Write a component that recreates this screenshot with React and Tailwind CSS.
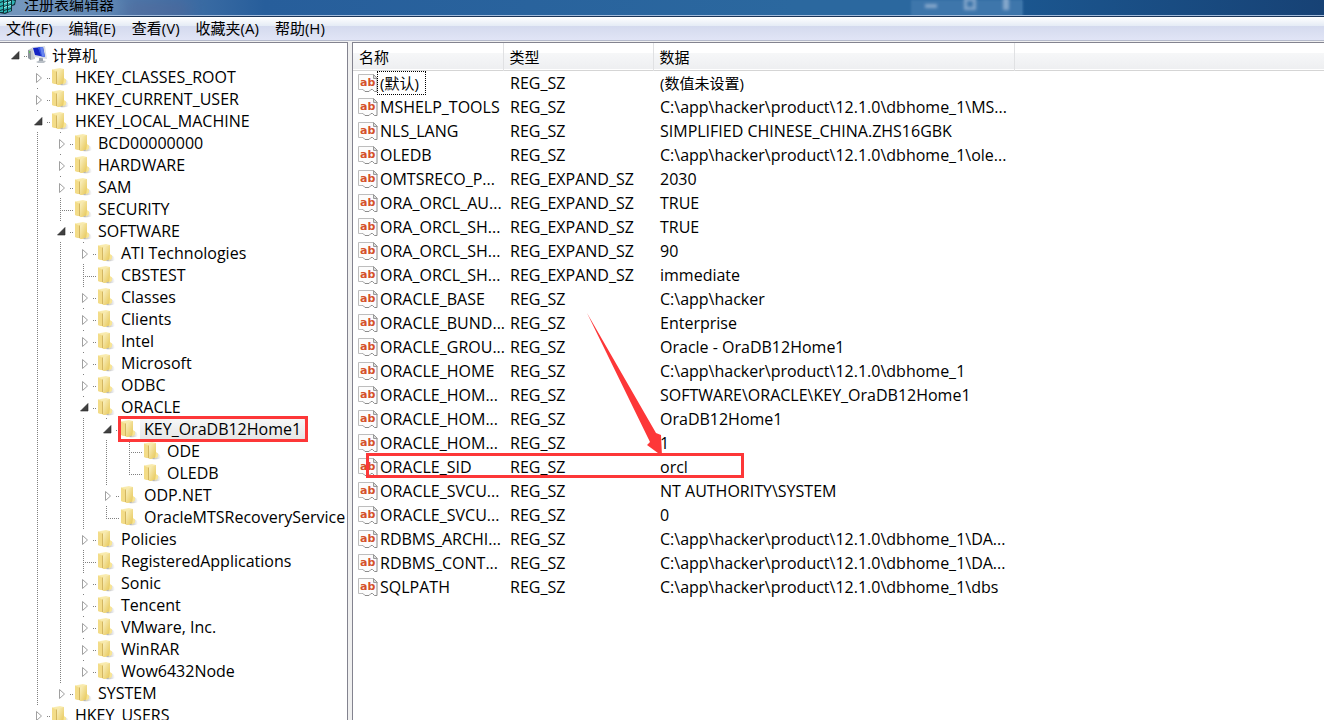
const MENU = ['文件(F)', '编辑(E)', '查看(V)', '收藏夹(A)', '帮助(H)']

// [level, name, state, last child of its parent]
const TREE = [
  [0, '计算机', 'open'],
  [1, 'HKEY_CLASSES_ROOT', 'closed'],
  [1, 'HKEY_CURRENT_USER', 'closed'],
  [1, 'HKEY_LOCAL_MACHINE', 'open'],
  [2, 'BCD00000000', 'closed'],
  [2, 'HARDWARE', 'closed'],
  [2, 'SAM', 'closed'],
  [2, 'SECURITY', 'leaf'],
  [2, 'SOFTWARE', 'open'],
  [3, 'ATI Technologies', 'closed'],
  [3, 'CBSTEST', 'leaf'],
  [3, 'Classes', 'closed'],
  [3, 'Clients', 'closed'],
  [3, 'Intel', 'closed'],
  [3, 'Microsoft', 'closed'],
  [3, 'ODBC', 'closed'],
  [3, 'ORACLE', 'open'],
  [4, 'KEY_OraDB12Home1', 'open'],
  [5, 'ODE', 'leaf'],
  [5, 'OLEDB', 'leaf', true],
  [4, 'ODP.NET', 'closed'],
  [4, 'OracleMTSRecoveryService', 'leaf', true],
  [3, 'Policies', 'closed'],
  [3, 'RegisteredApplications', 'leaf'],
  [3, 'Sonic', 'closed'],
  [3, 'Tencent', 'closed'],
  [3, 'VMware, Inc.', 'closed'],
  [3, 'WinRAR', 'closed'],
  [3, 'Wow6432Node', 'closed', true],
  [2, 'SYSTEM', 'closed', true],
  [1, 'HKEY_USERS', 'closed'],
]

const VALUES = [
  ['(默认)', 'REG_SZ', '(数值未设置)'],
  ['MSHELP_TOOLS', 'REG_SZ', 'C:\\app\\hacker\\product\\12.1.0\\dbhome_1\\MS...'],
  ['NLS_LANG', 'REG_SZ', 'SIMPLIFIED CHINESE_CHINA.ZHS16GBK'],
  ['OLEDB', 'REG_SZ', 'C:\\app\\hacker\\product\\12.1.0\\dbhome_1\\ole...'],
  ['OMTSRECO_P...', 'REG_EXPAND_SZ', '2030'],
  ['ORA_ORCL_AU...', 'REG_EXPAND_SZ', 'TRUE'],
  ['ORA_ORCL_SH...', 'REG_EXPAND_SZ', 'TRUE'],
  ['ORA_ORCL_SH...', 'REG_EXPAND_SZ', '90'],
  ['ORA_ORCL_SH...', 'REG_EXPAND_SZ', 'immediate'],
  ['ORACLE_BASE', 'REG_SZ', 'C:\\app\\hacker'],
  ['ORACLE_BUND...', 'REG_SZ', 'Enterprise'],
  ['ORACLE_GROU...', 'REG_SZ', 'Oracle - OraDB12Home1'],
  ['ORACLE_HOME', 'REG_SZ', 'C:\\app\\hacker\\product\\12.1.0\\dbhome_1'],
  ['ORACLE_HOM...', 'REG_SZ', 'SOFTWARE\\ORACLE\\KEY_OraDB12Home1'],
  ['ORACLE_HOM...', 'REG_SZ', 'OraDB12Home1'],
  ['ORACLE_HOM...', 'REG_SZ', '1'],
  ['ORACLE_SID', 'REG_SZ', 'orcl'],
  ['ORACLE_SVCU...', 'REG_SZ', 'NT AUTHORITY\\SYSTEM'],
  ['ORACLE_SVCU...', 'REG_SZ', '0'],
  ['RDBMS_ARCHI...', 'REG_SZ', 'C:\\app\\hacker\\product\\12.1.0\\dbhome_1\\DA...'],
  ['RDBMS_CONT...', 'REG_SZ', 'C:\\app\\hacker\\product\\12.1.0\\dbhome_1\\DA...'],
  ['SQLPATH', 'REG_SZ', 'C:\\app\\hacker\\product\\12.1.0\\dbhome_1\\dbs'],
]

// Chinese labels are set one pixel smaller than the Latin ones
const textSize = s => (/[\u4e00-\u9fff]/.test(s) ? 'text-[15px]' : 'text-[16px]')

function RegeditLogo() {
  return (
    <svg className="w-4 h-4 shrink-0" viewBox="0 0 16 16">
      <path d="M0 0h13l3 2-1 5-3 1v5l-7 3-5-1z" fill="#0d3238" />
      <path d="M0 1l3-1v3l-3 1zM4 0h3v3l-3 1zM8 0h3l1 1-4 2zM0 5l3-1v3l-3 1zM4 5l3-1v3l-3 1zM8 4l3-1v3l-3 1zM0 9l3-1v3l-3 1zM4 9l3-1v3l-3 1zM8 8l3-1v3l-3 1zM4 13l3-1v2l-3 1zM8 12l3-1v2l-3 1zM0 13l3-1v2H0zM12 2l3 1-1 3-2 1z" fill="#2fb5b5" />
      <path d="M4 1l3-1M4 5.500l3-1M8 4.500l3-1M4 9.500l3-1M8 8.500l3-1" stroke="#a5f3ef" />
    </svg>
  )
}

function FolderIcon() {
  return (
    <svg className="w-5 h-5 shrink-0" viewBox="0 0 20 20">
      <defs>
        <linearGradient id="front" x1="0" y1="0" x2="1" y2="1">
          <stop offset="0" stopColor="#fbf3c8" />
          <stop offset="1" stopColor="#e6c552" />
        </linearGradient>
        <linearGradient id="back" x1="0" y1="0" x2="0" y2="1">
          <stop offset="0" stopColor="#faeeb5" />
          <stop offset="1" stopColor="#edcf68" />
        </linearGradient>
        <linearGradient id="shade" x1="0" y1="0" x2="1" y2="0">
          <stop offset="0" stopColor="#a8a8a8" />
          <stop offset="1" stopColor="#a8a8a8" stopOpacity="0" />
        </linearGradient>
      </defs>
      <path d="M9 18l4-6 3 1q2 2 2 4-3 2-9 1z" fill="url(#shade)" />
      <path d="M1 2.500 9 1l4 1v14l-5 2-7-2z" fill="url(#back)" />
      <path d="M1 2.500l4 2V17l-4-1z" fill="#f3dc88" />
      <path d="M6 5l2-1.500L13 2v14l-7 2z" fill="url(#front)" />
      <path d="M5.500 4.500v12.500" stroke="#d3b661" />
      <path d="M13 11l2 1.500v3L12 18z" fill="#f8e596" />
    </svg>
  )
}

function ComputerIcon() {
  return (
    <svg className="w-5 h-5 shrink-0" viewBox="0 0 20 20">
      <path d="M0 5l4-2 3 2v9l-4 1-3-2z" fill="#c3c8cd" />
      <path d="M0 5l3 1v9l-3-2z" fill="#8c949c" />
      <path d="M1.500 6v2" stroke="#63c25a" />
      <path d="M8 17l4-2 6 1-2 2h-6z" fill="#b9bfc6" />
      <path d="M11 13h4v3h-4z" fill="#9aa2ab" />
      <path d="M4 2l13-1 2 13L6 12z" fill="#d9dde4" />
      <path d="M5 3l10-1 2 10L7 10z" fill="#1423c4" />
      <path d="M10 2.500 15 2l2 10-3-.6z" fill="#6583ee" />
      <path d="M10 2.500l2-.2 2 9-1-.2z" fill="#3150de" />
    </svg>
  )
}

function StringIcon() {
  return (
    <svg className="w-5 h-5 shrink-0" viewBox="0 0 20 20">
      <path d="M.5 16.500V1.500h15l4 4v13h-2l-3-2-3 2H8l-3-2z" fill="#fcfcfc" />
      <path d="M.5 16.500V1.500h15M.5 16.500H5" fill="none" stroke="#bdbdbd" />
      <path d="M5 16.500 7 18.500h4l2-2h1.500l2 2h2.500V6" fill="none" stroke="#8c8c8c" />
      <path d="M15.500 1.500v4h4z" fill="#dedede" stroke="#999" />
      <text x="2" y="13" className="font-bold" fill="#d4502a" fontSize="11" fontFamily="DejaVu Sans">ab</text>
    </svg>
  )
}

// dotted guides and the expander in front of one tree item
function Guides({ level, state, last, passing }) {
  const end = 5 + 23 * (level + 1)
  const left = end - 23
  const leaf = state === 'leaf'
  return (
    <svg width={end} height="22" className="shrink-0" aria-hidden="true">
      <g stroke="#808080" strokeDasharray="1 1" shapeRendering="crispEdges">
        {passing.map(k => <path key={k} d={`M${5 + 23 * k + 9.5} 0v22`} />)}
        {level > 0 && <path d={`M${left + 9.5} 0v${leaf ? (last ? 12 : 22) : 2}`} />}
        <path d={`M${leaf ? left + 9 : left + 19} 12.500H${end}`} />
      </g>
      {state === 'closed' && (
        <path d={`M${left + 8.5} 7.500v9l5-4.500z`} fill="#fff" stroke="#a0a0a0" />
      )}
      {state === 'open' && (
        <path d={`M${left + 14} 7.500v7.500h-7.500z`} fill="#404040" stroke="#262626" strokeWidth=".6" />
      )}
    </svg>
  )
}

function TreeItem({ item, passing }) {
  const [level, name, state, last] = item
  const selected = name === 'KEY_OraDB12Home1'
  return (
    <li role="treeitem" aria-level={level + 1} aria-selected={selected} className="flex h-[22px] items-center">
      <Guides level={level} state={state} last={last} passing={passing} />
      <button className={`relative flex items-center whitespace-nowrap ${textSize(name)}`}>
        {level === 0 ? <ComputerIcon /> : <FolderIcon />}
        <span className={selected ? 'px-1 leading-[22px] rounded-r-sm bg-gradient-to-b from-[#f8f8f8] to-[#e5e5e5] border-r border-[#d0d0d0]' : 'px-1 leading-[22px]'}>
          {name}
        </span>
        {selected && <span className="absolute -inset-0.5 border-3 border-[#fd3738]" />}
      </button>
    </li>
  )
}

function SidMark() {
  return (
    <>
      <span className="absolute z-10 left-[13px] -top-0.5 w-[378px] h-[25px] border-3 border-[#fd3738]" />
      <svg className="absolute z-10 left-[234px] bottom-[22px]" width="78" height="144" viewBox="0 0 78 144">
        <path d="M0 0 69 120l5 2 1 21-15-11 3-3z" fill="#fd3738" />
      </svg>
    </>
  )
}

// levels whose dotted line runs on past item i, because a sibling follows further down
function passingLevels(i) {
  const levels = []
  for (let k = 1; k < TREE[i][0]; k++) {
    const next = TREE.slice(i + 1).find(item => item[0] <= k)
    if (next && next[0] === k) levels.push(k)
  }
  return levels
}

export default function App() {
  return (
    <div className="flex flex-col h-screen overflow-hidden bg-[#f0f0f0] text-[15px] text-black font-['Open_Sans','Noto_Sans_CJK_SC',sans-serif]">
      <header className="relative flex items-end h-[17px] shrink-0 overflow-hidden border-b border-[#1b3558]">
        <div className="absolute inset-0 bg-gradient-to-r from-[#6f93bb] from-0% via-[#275e9b] via-20% to-[#2b689f] to-60%" />
        <div className="absolute left-[10px] top-0 w-[110px] h-3 bg-[#9db4cd] opacity-40 blur-sm" />
        <div className="absolute left-[125px] top-1 w-[65px] h-3 bg-[#5f5d8a] opacity-50 blur-sm" />
        <div className="absolute right-0 inset-y-0 w-[302px] bg-gradient-to-r from-[#1b568f] to-[#174275]" />
        <div className="absolute right-[301px] inset-y-0 w-[112px] flex justify-around items-center bg-[#4479ae]/80 blur-[1px]">
          <span className="w-3 h-1 -mt-1 bg-[#86a8cc] blur-[1px]" />
          <span className="w-3 h-3 -mt-2 border-3 border-[#86a8cc] blur-[1px]" />
          <span className="w-1.5 h-3 -mt-2 bg-[#86a8cc] blur-[1px]" />
        </div>
        <div className="absolute inset-x-0 bottom-0 h-px bg-[#a3bcdc]" />
        <div className="relative flex items-end gap-2 pb-0.5">
          <RegeditLogo />
          <h1 className="leading-[20px]">注册表编辑器</h1>
        </div>
      </header>

      <nav className="flex items-center gap-4 h-6 shrink-0 pl-1.5 border-b border-[#b5bacb] bg-[linear-gradient(#fff,#e4ebf5_40%,#d4daee_40%,#e1e5f6)]">
        {MENU.map(m => <button key={m} className="whitespace-nowrap">{m}</button>)}
      </nav>

      <main className="flex flex-1 min-h-0 gap-1 pt-px">
        <section className="w-[348px] shrink-0 overflow-hidden bg-white border-t border-r border-[#83838f]">
          <ul role="tree" aria-label="注册表编辑器" className="pt-px">
            {TREE.map((item, i) => <TreeItem key={i} item={item} passing={passingLevels(i)} />)}
          </ul>
        </section>

        <section className="flex-1 min-w-0 overflow-hidden bg-white border-t border-l border-[#83838f]">
          <table className="w-full table-fixed text-left whitespace-nowrap">
            <colgroup>
              <col className="w-[150px]" />
              <col className="w-[150px]" />
              <col className="w-[361px]" />
              <col />
            </colgroup>
            <thead>
              <tr className="h-[27px] border-b border-[#d5d5d5] bg-[linear-gradient(#fff_40%,#f6f7f8_40%,#eeeff1)]">
                {['名称', '类型', '数据'].map(h => (
                  <th key={h} className="p-0 pl-1.5 pt-px leading-[24px] font-normal border-r border-[#e0e1e3]">{h}</th>
                ))}
                <td />
              </tr>
            </thead>
            <tbody>
              {VALUES.map(([name, type, data], i) => (
                <tr key={i} className="h-6">
                  <td className="relative p-0 pl-[5px]">
                    <div className={`flex items-center ${textSize(name)}`}>
                      <StringIcon />
                      <span className={i === 0 ? 'pl-0.5 pr-1.5 leading-[22px] outline-1 outline-dotted outline-black' : 'px-0.5 leading-[24px]'}>{name}</span>
                    </div>
                    {name === 'ORACLE_SID' && <SidMark />}
                  </td>
                  <td className="p-0 pl-[7px] leading-[24px] text-[16px]">{type}</td>
                  <td className={`p-0 pl-[7px] leading-[24px] ${textSize(data)}`}>{data}</td>
                  <td />
                </tr>
              ))}
            </tbody>
          </table>
        </section>
      </main>
    </div>
  )
}
